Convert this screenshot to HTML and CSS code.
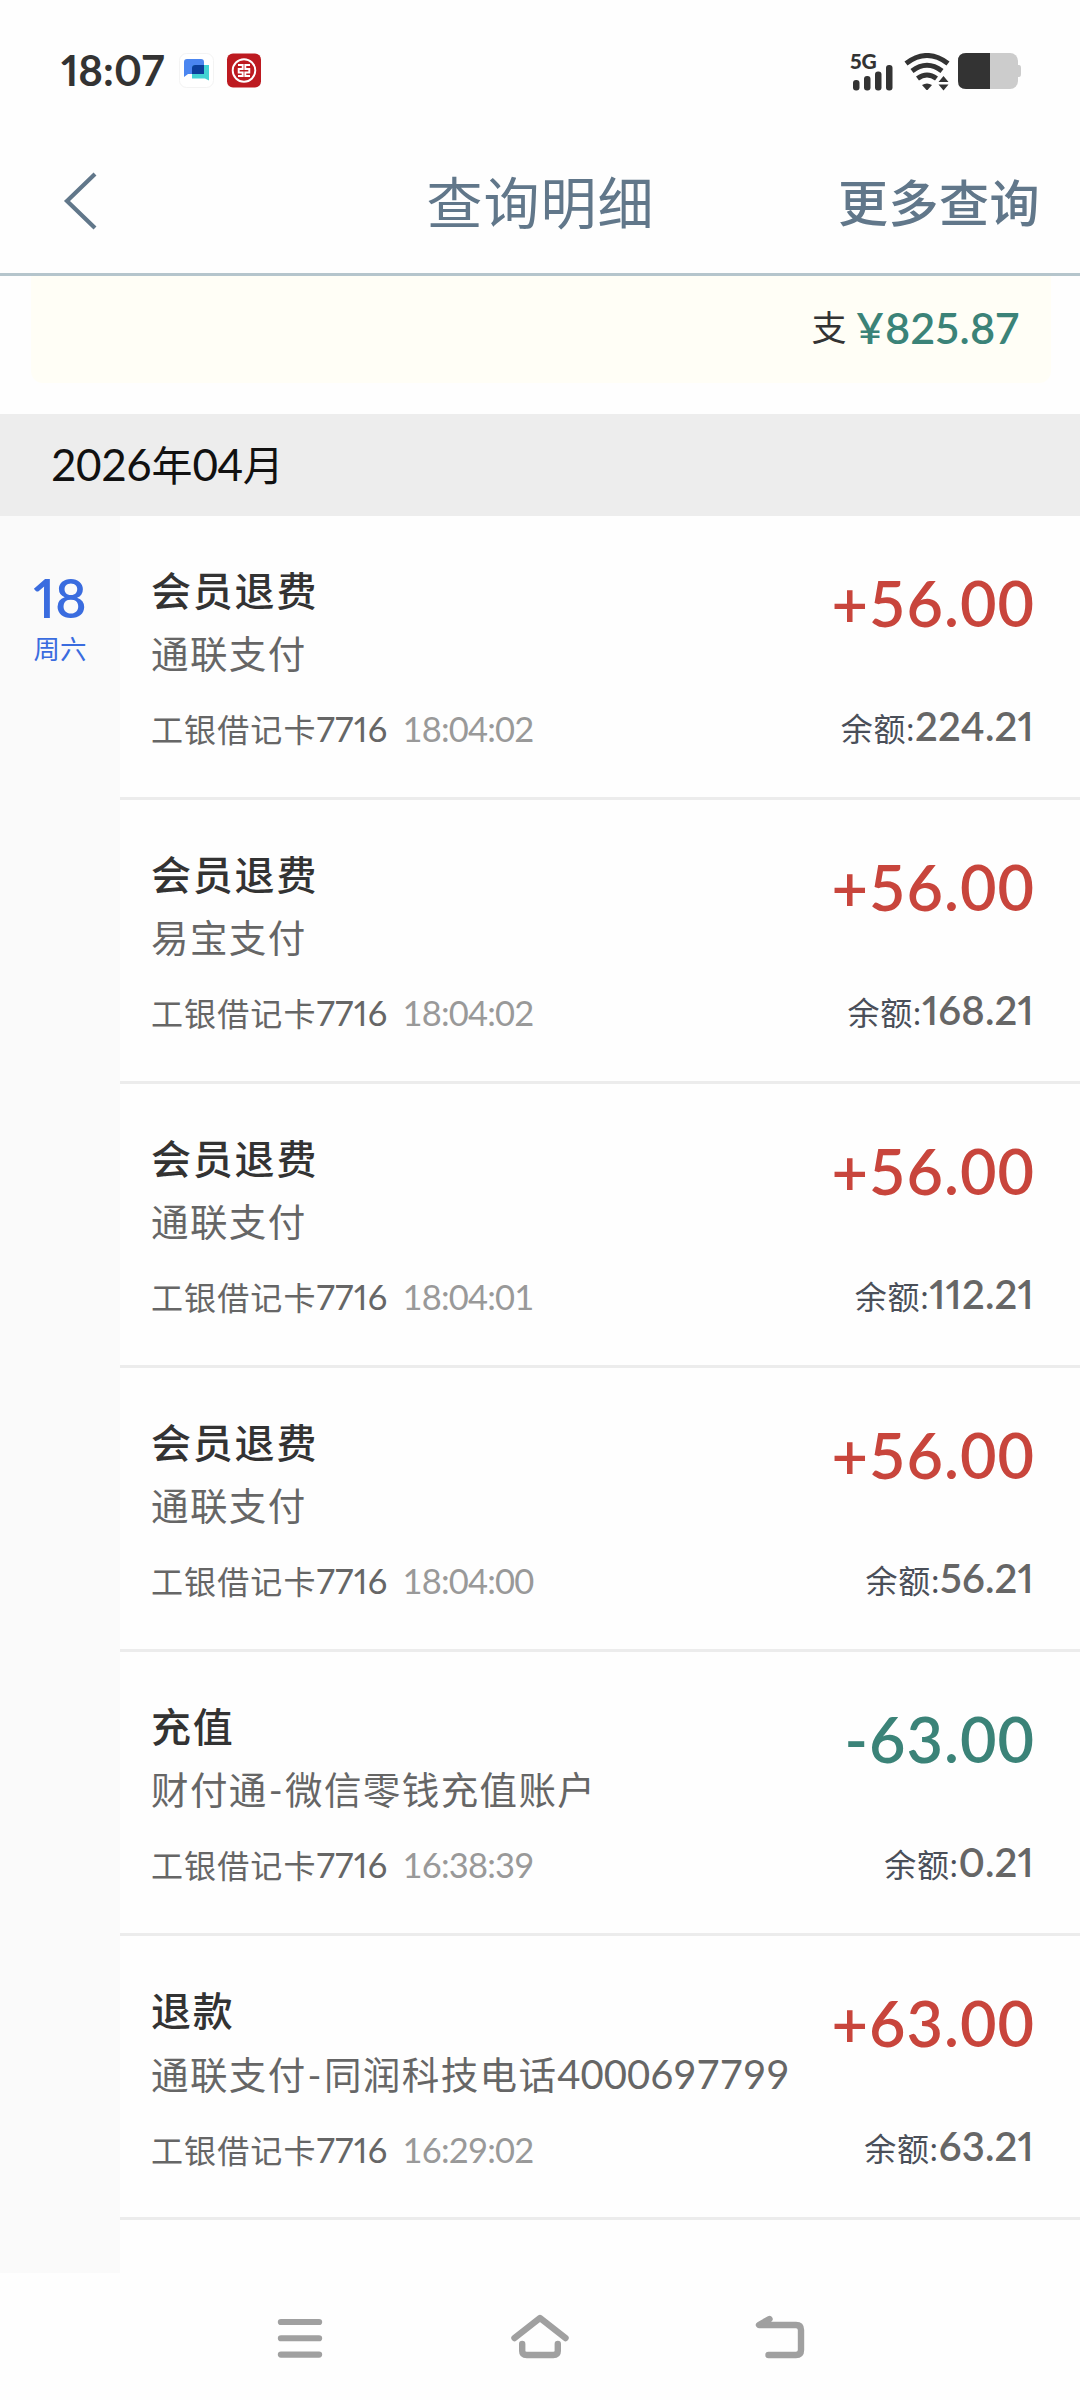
FILE: index.html
```html
<!DOCTYPE html>
<html lang="zh-CN">
<head>
<meta charset="utf-8">
<title>查询明细</title>
<link rel="stylesheet" href="styles.css">
</head>
<body>
<div class="status">
  <span class="clock">18:07</span>
  <svg class="app" width="36" height="36" viewBox="0 0 36 36"><rect x=".5" y=".5" width="34" height="34" rx="7" fill="#fff" stroke="#f3f3f3"/><path d="M5 9q0-3 3-3h14q3 0 3 3v12H9l-4 3z" fill="#4b86f0"/><path d="M16 12h14v15.500l-4-2H13V16q0-4 3-4z" fill="#42d3d3"/><path d="M16 12h9v9H13v-6q0-3 3-3z" fill="#0b3f9c"/></svg>
  <svg class="app bank" width="36" height="36" viewBox="0 0 36 36"><rect x="1" y=".5" width="34" height="34" rx="6" fill="#bd1a20"/><circle cx="18" cy="17.500" r="11.300" fill="none" stroke="#fff" stroke-width="1.900"/><path d="M12 12h4.700v4h-4v3.500h4V23H12M24 12h-4.700v4h4v3.500h-4V23H24" fill="none" stroke="#fff" stroke-width="1.900"/></svg>
  <span class="grow"></span>
  <div class="signal"><span class="net">5G</span>
    <svg width="42" height="26" viewBox="0 0 42 26" fill="#333"><rect x="1" y="15" width="6.500" height="10.500" rx="3"/><rect x="12" y="11" width="6.500" height="14.500" rx="3"/><rect x="23" y="6.500" width="6.500" height="19" rx="3"/><rect x="34" y="0" width="6.500" height="25.500" rx="3"/></svg>
  </div>
  <svg class="wifi" width="46" height="38" viewBox="0 0 46 38" fill="none" stroke="#333" stroke-width="5"><path d="M2 10.500Q23-5.500 44 10.500"/><path d="M8 18Q23 6.500 38 18"/><path d="M13.500 25.500Q23 18.500 32.500 25.500"/><path d="M18 32q5-3 10 0l-4 4.500q-1 1-2 0z" fill="#333" stroke="none"/><path d="M39.500 23l5 6h-10zM39.500 37.500l5-6h-10z" fill="#333" stroke="none"/></svg>
  <svg class="battery" width="64" height="36" viewBox="0 0 64 36"><rect width="60" height="36" rx="8" fill="#ccc"/><path d="M60 12h1q2 0 2 3v6q0 3-2 3h-1z" fill="#ccc"/><path d="M32 0H8Q0 0 0 8v20q0 8 8 8h24z" fill="#333"/></svg>
</div>
<header class="nav">
  <svg class="back" width="36" height="60" viewBox="0 0 36 60"><path d="M34 3L6 30l28 27" fill="none" stroke="#61778a" stroke-width="4.200"/></svg>
  <h1>查询明细</h1>
  <span class="more">更多查询</span>
</header>
<div class="summary"><span class="out">支</span><span class="sum">¥825.87</span></div>
<div class="month"><span class="num">2026</span>年<span class="num">04</span>月</div>
<main class="list">
  <aside class="day"><div class="date">18</div><div class="week">周六</div></aside>
  <div class="rows">
    <section class="row"><div class="info"><div class="title">会员退费</div><div class="sub">通联支付</div><div class="card">工银借记卡<span class="tail">7716</span><span class="time">18:04:02</span></div></div><div class="money"><div class="amount">+56.00</div><div class="balance">余额:<span class="value">224.21</span></div></div></section>
    <section class="row"><div class="info"><div class="title">会员退费</div><div class="sub">易宝支付</div><div class="card">工银借记卡<span class="tail">7716</span><span class="time">18:04:02</span></div></div><div class="money"><div class="amount">+56.00</div><div class="balance">余额:<span class="value">168.21</span></div></div></section>
    <section class="row"><div class="info"><div class="title">会员退费</div><div class="sub">通联支付</div><div class="card">工银借记卡<span class="tail">7716</span><span class="time">18:04:01</span></div></div><div class="money"><div class="amount">+56.00</div><div class="balance">余额:<span class="value">112.21</span></div></div></section>
    <section class="row"><div class="info"><div class="title">会员退费</div><div class="sub">通联支付</div><div class="card">工银借记卡<span class="tail">7716</span><span class="time">18:04:00</span></div></div><div class="money"><div class="amount">+56.00</div><div class="balance">余额:<span class="value">56.21</span></div></div></section>
    <section class="row"><div class="info"><div class="title">充值</div><div class="sub">财付通<span class="dash">-</span>微信零钱充值账户</div><div class="card">工银借记卡<span class="tail">7716</span><span class="time">16:38:39</span></div></div><div class="money"><div class="amount minus">-63.00</div><div class="balance">余额:<span class="value">0.21</span></div></div></section>
    <section class="row"><div class="info"><div class="title">退款</div><div class="sub">通联支付<span class="dash">-</span>同润科技电话<span class="phone">4000697799</span></div><div class="card">工银借记卡<span class="tail">7716</span><span class="time">16:29:02</span></div></div><div class="money"><div class="amount">+63.00</div><div class="balance">余额:<span class="value">63.21</span></div></div></section>
  </div>
</main>
<footer class="keys">
  <svg width="60" height="60" viewBox="0 0 60 60"><path d="M11 13h38M11 30h38M11 47h38" transform="translate(0 .5) scale(1 .96)"/></svg>
  <svg width="60" height="60" viewBox="0 0 60 60"><path d="M4.500 29L30 9l25.500 20M12.200 35V42q0 4 4.500 4h26.600q4.500 0 4.500-4v-7"/></svg>
  <svg width="60" height="60" viewBox="0 0 60 60"><path d="M19.500 10L9 16h37q5 0 5 5v20q0 5-5 5H18.500"/></svg>
</footer>
</body>
</html>
```
FILE: styles.css
```css
* { box-sizing: border-box; }
body {
  margin: 0;
  width: 1080px;
  height: 2400px;
  overflow: hidden;
  display: flex;
  flex-direction: column;
  background: #fefefe;
  color: #333;
  font-family: Lato, "Noto Sans CJK SC", sans-serif;
  font-variant-numeric: proportional-nums lining-nums;
  white-space: nowrap;
}
svg { display: block; flex: none; }

.status { height: 128px; padding: 0 58px 0 61px; display: flex; align-items: flex-start; }
.clock { width: 118px; margin-top: 44px; font-size: 42px; line-height: 52px; font-weight: 700; }
.app { margin-top: 53px; }
.bank { margin-left: 11px; }
.grow { flex: 1; }
.signal { width: 42px; margin: 53px 10px 0 0; }
.net { display: block; height: 12px; margin-left: -2px; font-size: 21px; line-height: 15px; font-weight: 900; }
.wifi { margin: 53px 8px 0 0; }
.battery { margin-top: 53px; }

.nav {
  height: 148px;
  padding: 0 40px 0 61px;
  border-bottom: 3px solid #b5c5cc;
  display: grid;
  grid-template-columns: 280px 1fr 280px;
  color: #61778a;
}
.back { margin-top: 43px; }
h1 { margin: 0; padding-right: 20px; text-align: center; font-size: 56px; line-height: 150px; letter-spacing: 1px; font-weight: 400; }
.more { text-align: right; font-size: 50px; line-height: 150px; letter-spacing: .5px; font-weight: 500; }

.summary {
  height: 107px;
  margin: 0 29px 31px 31px;
  padding: 0 32px 0 0;
  border-radius: 0 0 12px 12px;
  background: #fffef6;
  display: flex;
  justify-content: flex-end;
  align-items: baseline;
  line-height: 103px;
}
.out { margin-right: 9px; font-size: 35px; line-height: 96px; position: relative; top: -3px; }
.sum { font-size: 43px; letter-spacing: .4px; font-weight: 600; color: #3b8378; }
.month { height: 102px; padding-left: 51px; background: #ededed; color: #111; font-size: 41px; line-height: 101px; }
.num { font-size: 44px; letter-spacing: -.4px; font-variant-numeric: tabular-nums; }

.list { height: 1757px; display: flex; }
.day { width: 120px; padding-top: 50px; background: #fafafa; color: #3a6cdf; text-align: center; }
.date { font-size: 54px; line-height: 64px; font-weight: 600; }
.week { font-size: 26.500px; line-height: 38px; }
.rows { flex: 1; }
.row { height: 284px; padding: 0 46px 0 31px; border-bottom: 3px solid #ececec; display: flex; justify-content: space-between; }
.title { margin-top: 45px; font-size: 40px; line-height: 60px; letter-spacing: 1.800px; font-weight: 500; }
.sub { margin-top: 5px; font-size: 37.500px; line-height: 56px; letter-spacing: 1.400px; color: #666; }
.dash { margin: 0 1px; }
.phone { font-size: 40px; letter-spacing: 0; font-variant-numeric: tabular-nums; }
.card { margin-top: 22px; font-size: 32px; line-height: 50px; letter-spacing: 1.100px; color: #666; }
.tail { font-size: 34.500px; letter-spacing: .3px; }
.time { margin-left: 15px; font-size: 34.500px; letter-spacing: -.8px; font-variant-numeric: tabular-nums; color: #999; }
.money { text-align: right; }
.amount { margin-top: 48px; margin-right: -1px; font-size: 63px; line-height: 78px; letter-spacing: 1px; font-weight: 600; font-variant-numeric: tabular-nums; color: #c8453c; }
.minus { color: #3b8378; }
.balance { margin-top: 59px; font-size: 32px; line-height: 50px; letter-spacing: .8px; color: #4a4f59; }
.value { font-size: 40px; letter-spacing: .2px; font-weight: 600; color: #666; }

.keys { height: 127px; padding: 36px 270px 0; display: flex; justify-content: space-between; }
.keys path { fill: none; stroke: #a0a0a0; stroke-width: 6.400; stroke-linecap: round; stroke-linejoin: round; }
```
